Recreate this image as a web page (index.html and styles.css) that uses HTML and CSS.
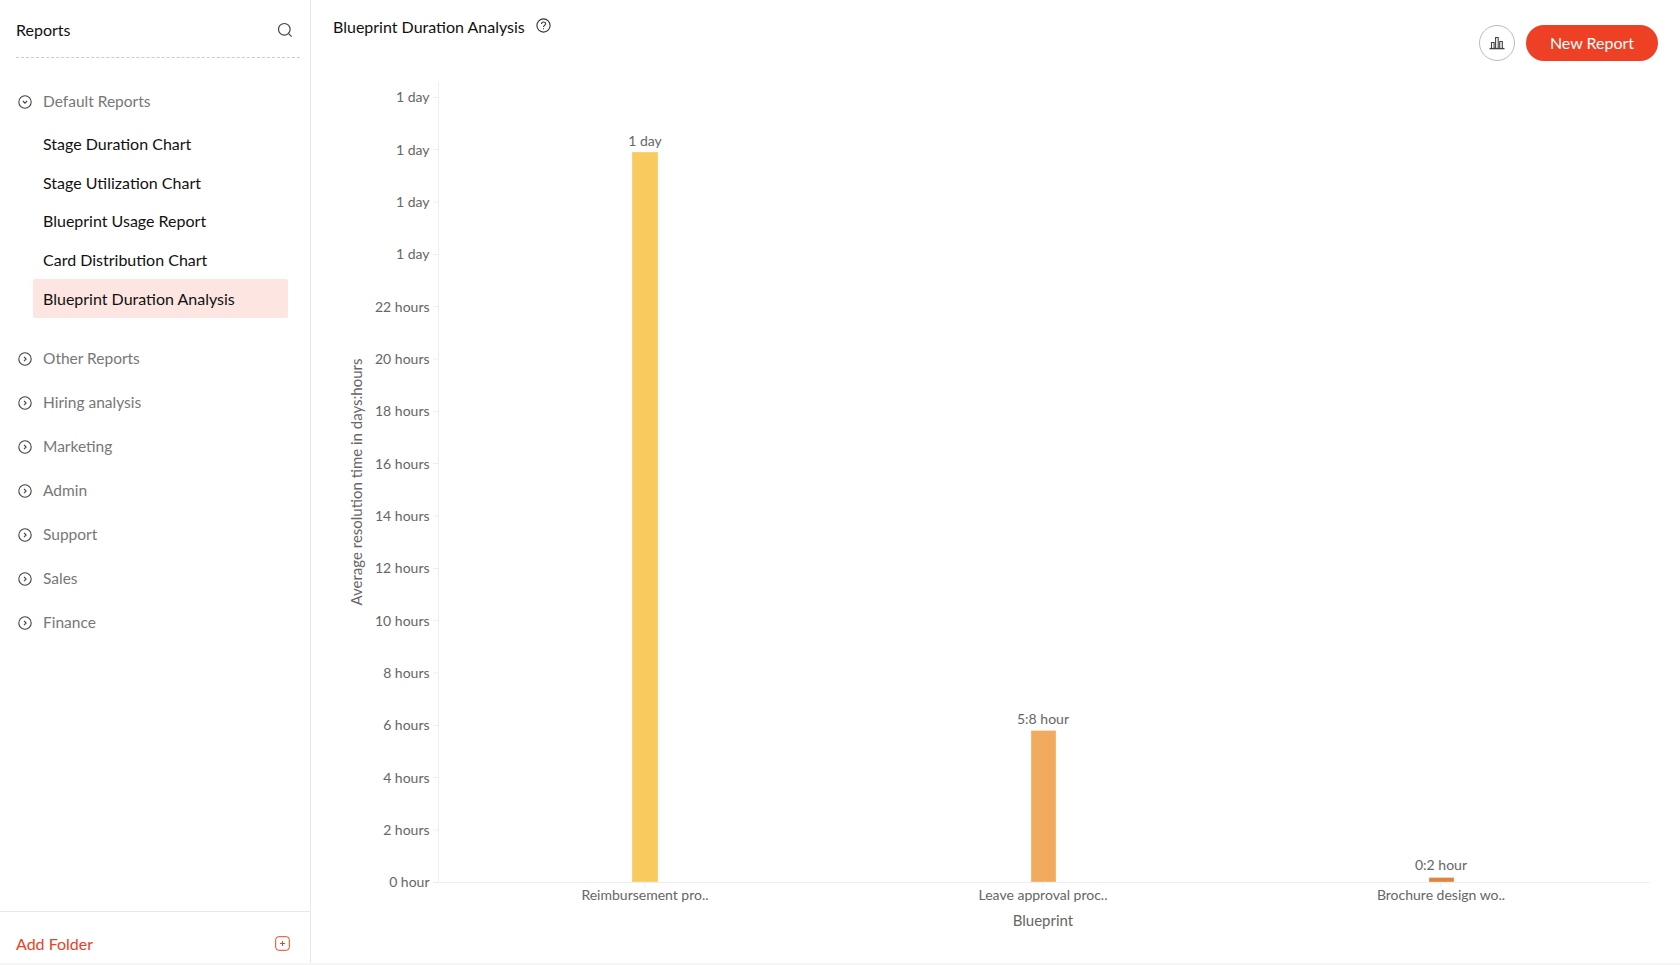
FILE: index.html
```html
<!DOCTYPE html>
<html>
<head>
	<meta charset="utf-8">
	<title>Reports</title>
	<link rel="stylesheet" href="styles.css">
</head>
<body>
	<div class="app">
		<aside class="sidebar">
			<div class="side-head">
				<span class="side-title">Reports</span>
				<svg class="search-icon" width="16" height="16" viewBox="0 0 16 16"><circle cx="7.3" cy="7.3" r="5.8"/><path d="M11.6 11.6 14.6 14.6"/></svg>
			</div>
			<div class="side-list">
				<div class="folder folder-open">
					<svg class="chev" width="14" height="14" viewBox="0 0 14 14"><circle cx="7" cy="7" r="6.2"/><path d="M4.9 6 7 8.1 9.1 6"/></svg>
					<span>Default Reports</span>
				</div>
				<ul class="reports">
					<li>Stage Duration Chart</li>
					<li>Stage Utilization Chart</li>
					<li>Blueprint Usage Report</li>
					<li>Card Distribution Chart</li>
					<li class="active">Blueprint Duration Analysis</li>
				</ul>
				<div class="folder"><svg class="chev" width="14" height="14" viewBox="0 0 14 14"><circle cx="7" cy="7" r="6.2"/><path d="M6 4.9 8.1 7 6 9.1"/></svg><span>Other Reports</span></div>
				<div class="folder"><svg class="chev" width="14" height="14" viewBox="0 0 14 14"><circle cx="7" cy="7" r="6.2"/><path d="M6 4.9 8.1 7 6 9.1"/></svg><span>Hiring analysis</span></div>
				<div class="folder"><svg class="chev" width="14" height="14" viewBox="0 0 14 14"><circle cx="7" cy="7" r="6.2"/><path d="M6 4.9 8.1 7 6 9.1"/></svg><span>Marketing</span></div>
				<div class="folder"><svg class="chev" width="14" height="14" viewBox="0 0 14 14"><circle cx="7" cy="7" r="6.2"/><path d="M6 4.9 8.1 7 6 9.1"/></svg><span>Admin</span></div>
				<div class="folder"><svg class="chev" width="14" height="14" viewBox="0 0 14 14"><circle cx="7" cy="7" r="6.2"/><path d="M6 4.9 8.1 7 6 9.1"/></svg><span>Support</span></div>
				<div class="folder"><svg class="chev" width="14" height="14" viewBox="0 0 14 14"><circle cx="7" cy="7" r="6.2"/><path d="M6 4.9 8.1 7 6 9.1"/></svg><span>Sales</span></div>
				<div class="folder"><svg class="chev" width="14" height="14" viewBox="0 0 14 14"><circle cx="7" cy="7" r="6.2"/><path d="M6 4.9 8.1 7 6 9.1"/></svg><span>Finance</span></div>
			</div>
			<div class="side-foot">
				<span>Add Folder</span>
				<svg class="add-icon" width="15" height="15" viewBox="0 0 15 15"><rect x="0.7" y="0.7" width="13.6" height="13.6" rx="3"/><path d="M7.5 5v5M5 7.5h5"/></svg>
			</div>
		</aside>
		<main class="main">
			<div class="main-head">
				<div class="title-row">
					<h1>Blueprint Duration Analysis</h1>
					<svg class="help-icon" width="15" height="15" viewBox="0 0 15 15"><circle cx="7.5" cy="7.5" r="6.6"/><path d="M5.5 5.9c0-2.6 4.1-2.6 4.1-.1 0 1.6-2.1 1.6-2.1 3.3"/><path d="M7.5 10.3v1"/></svg>
				</div>
				<div class="actions">
					<button class="chart-btn">
						<svg width="16" height="14" viewBox="0 0 16 14"><path d="M2.5 12V6.5h2.6V12M6.6 12V1.5h2.6V12M10.7 12V5.5h2.6V12"/><path class="base" d="M0.5 12.6h15"/></svg>
					</button>
					<button class="new-btn">New Report</button>
				</div>
			</div>
			<svg class="chart" width="1369" height="882" viewBox="311 80 1369 882">
				<g class="grid">
					<path d="M438.5 82V882.5H1649"/>
					<path d="M433 97.5h5M433 149.5h5M433 202h5M433 254.5h5M433 306.5h5M433 359h5M433 411.5h5M433 463.5h5M433 516h5M433 568.5h5M433 620.5h5M433 673h5M433 725.5h5M433 777.5h5M433 830h5M433 882.5h5"/>
					<path d="M645 882v5M1043 882v5M1441 882v5"/>
				</g>
				<g class="y-labels">
					<text x="429.5" y="102">1 day</text>
					<text x="429.5" y="155">1 day</text>
					<text x="429.5" y="207">1 day</text>
					<text x="429.5" y="259">1 day</text>
					<text x="429.5" y="312">22 hours</text>
					<text x="429.5" y="364">20 hours</text>
					<text x="429.5" y="416">18 hours</text>
					<text x="429.5" y="469">16 hours</text>
					<text x="429.5" y="521">14 hours</text>
					<text x="429.5" y="573">12 hours</text>
					<text x="429.5" y="626">10 hours</text>
					<text x="429.5" y="678">8 hours</text>
					<text x="429.5" y="730">6 hours</text>
					<text x="429.5" y="783">4 hours</text>
					<text x="429.5" y="835">2 hours</text>
					<text x="429.5" y="887">0 hour</text>
				</g>
				<text class="axis-name" transform="translate(362 482) rotate(-90)">Average resolution time in days:hours</text>
				<rect class="bar" x="632" y="152" width="26" height="730" fill="#f8cb5e"/>
				<rect class="bar" x="1031" y="730.5" width="25" height="151.5" fill="#f2ab5e"/>
				<rect class="bar" x="1429" y="877.5" width="25" height="4.5" fill="#e0843f"/>
				<g class="labels">
					<text x="645" y="146">1 day</text>
					<text x="1043" y="724">5:8 hour</text>
					<text x="1441" y="870">0:2 hour</text>
					<text x="645" y="900">Reimbursement pro..</text>
					<text x="1043" y="900">Leave approval proc..</text>
					<text x="1441" y="900">Brochure design wo..</text>
					<text class="x-name" x="1043" y="926">Blueprint</text>
				</g>
			</svg>
		</main>
	</div>
</body>
</html>
```

FILE: styles.css
```css
* {
	box-sizing: border-box;
}
html, body {
	margin: 0;
	height: 100%;
	overflow: hidden;
}
body {
	background-color: #fff;
	font-family: "Lato", sans-serif;
	font-size: 16px;
	color: #111;
}
.app {
	display: flex;
	height: 965px;
	border-bottom: 2px solid #f6f6f6;
}
.sidebar {
	width: 311px;
	flex: none;
	display: flex;
	flex-direction: column;
	border-right: 1px solid #e8e8e8;
}
.side-head {
	display: flex;
	align-items: center;
	justify-content: space-between;
	height: 58px;
	margin: 0 10px 0 16px;
	padding: 2px 7px 0 0;
	border-bottom: 1px dashed #ccc;
}
.search-icon {
	fill: none;
	stroke: #444;
	stroke-width: 1.2;
}
.side-list {
	flex: 1;
	padding-top: 21px;
}
.folder {
	display: flex;
	align-items: center;
	height: 44px;
	padding-left: 18px;
	color: #777;
	font-size: 15.5px;
}
.folder span {
	margin-left: 11px;
}
.chev {
	margin-top: 2px;
	fill: none;
	stroke: #444;
	stroke-width: 1.1;
}
.reports {
	list-style: none;
	margin: 2px 0 18px;
	padding: 0 0 0 33px;
}
.reports li {
	height: 38.5px;
	line-height: 38.5px;
	width: 255px;
	padding-left: 10px;
	border-radius: 2px;
}
.reports .active {
	height: 39px;
	line-height: 39px;
	background-color: #fde6e1;
}
.side-foot {
	display: flex;
	align-items: center;
	justify-content: space-between;
	height: 52px;
	padding: 11px 20px 0 16px;
	border-top: 1px solid #e8e8e8;
	color: #ee4024;
}
.add-icon {
	margin-top: 1px;
	fill: none;
	stroke: #ee4024;
	stroke-width: 1;
}
.main {
	flex: 1;
	display: flex;
	flex-direction: column;
}
.main-head {
	flex: none;
	display: flex;
	justify-content: space-between;
	align-items: flex-start;
	height: 80px;
	padding: 0 22px;
}
.title-row {
	display: flex;
	align-items: center;
	height: 54px;
}
h1 {
	margin: 0 0 2px;
	font-size: 16px;
	font-weight: 400;
}
.help-icon {
	margin: 0 0 3px 11px;
	fill: none;
	stroke: #333;
	stroke-width: 1.1;
}
.actions {
	display: flex;
	gap: 11px;
	margin-top: 25px;
}
button {
	font-family: inherit;
	cursor: pointer;
}
.chart-btn {
	display: flex;
	align-items: center;
	justify-content: center;
	width: 36px;
	height: 36px;
	padding: 0;
	background-color: #fff;
	border: 1px solid #bbb;
	border-radius: 50%;
}
.chart-btn svg {
	fill: none;
	stroke: #444;
	stroke-width: 1.1;
}
.chart-btn .base {
	stroke-width: 1.4;
}
.new-btn {
	width: 132px;
	height: 36px;
	padding: 0 0 2px;
	background-color: #ee4024;
	border: none;
	border-radius: 18px;
	color: #fff;
	font-size: 16px;
}
.chart {
	display: block;
	flex: none;
}
.chart text {
	font-family: "Lato", sans-serif;
	font-size: 14px;
	fill: #666;
}
.grid path {
	fill: none;
	stroke: #eee;
	stroke-width: 1;
}
.bar {
	stroke: rgba(255, 255, 255, 0.3);
	stroke-width: 1;
}
.y-labels text {
	text-anchor: end;
}
.labels text,
.chart .axis-name {
	text-anchor: middle;
}
.chart .axis-name,
.chart .x-name {
	font-size: 15px;
}
```
